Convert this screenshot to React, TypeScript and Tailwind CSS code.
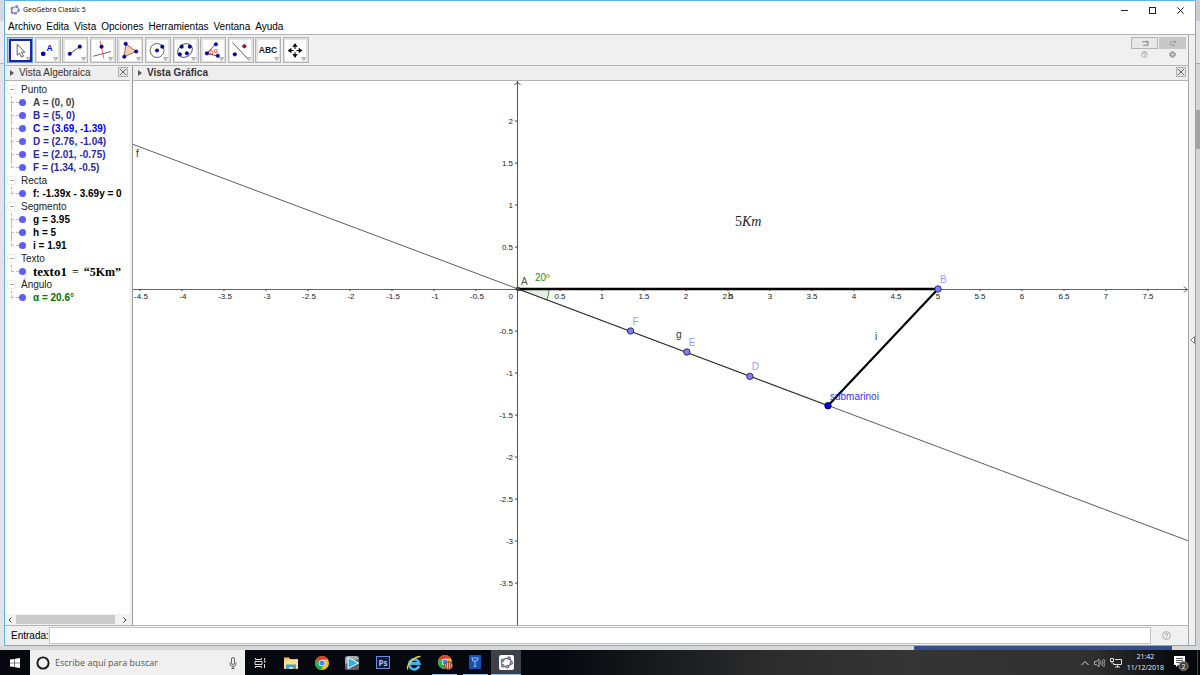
import type { ReactNode } from "react";
import clsx from "clsx";

type Item = { label: ReactNode; color: string };
type Group = { name: string; items: Item[] };

const MENU = ["Archivo", "Edita", "Vista", "Opciones", "Herramientas", "Ventana", "Ayuda"];

const GROUPS: Group[] = [
  {
    name: "Punto",
    items: [
      { label: "A = (0, 0)", color: "text-[#444444]" },
      { label: "B = (5, 0)", color: "text-[#2a2aa8]" },
      { label: "C = (3.69, -1.39)", color: "text-[#0000ff]" },
      { label: "D = (2.76, -1.04)", color: "text-[#2a2aa8]" },
      { label: "E = (2.01, -0.75)", color: "text-[#2a2aa8]" },
      { label: "F = (1.34, -0.5)", color: "text-[#2a2aa8]" },
    ],
  },
  { name: "Recta", items: [{ label: "f: -1.39x - 3.69y = 0", color: "text-black" }] },
  {
    name: "Segmento",
    items: [
      { label: "g = 3.95", color: "text-black" },
      { label: "h = 5", color: "text-black" },
      { label: "i = 1.91", color: "text-black" },
    ],
  },
  {
    name: "Texto",
    items: [
      {
        label: (
          <span className="flex items-baseline gap-[5px] font-['Liberation_Serif',serif] text-[12px]">
            <span className="text-[13px]">texto1</span>
            <span className="font-normal">=</span>
            <span>“5Km”</span>
          </span>
        ),
        color: "text-black",
      },
    ],
  },
  { name: "Ángulo", items: [{ label: "α = 20.6°", color: "text-[#007400]" }] },
];

const dot = (cx: number, cy: number, fill = "#0000b4") => (
  <circle cx={cx} cy={cy} r="1.9" fill={fill} stroke="#000050" strokeWidth="0.4" />
);

const TOOLS: { name: string; icon: ReactNode }[] = [
  {
    name: "Elige y mueve",
    icon: <path d="M7.500 4.500V16l2.600-2.200 2 4.200 2-1-2-4.200h3.400z" fill="#fff" stroke="#444" strokeWidth="0.9" />,
  },
  {
    name: "Punto",
    icon: (
      <>
        <circle cx="6.5" cy="14.5" r="2.5" fill="#0000b4" />
        <text x="10" y="11" fontSize="9" fontWeight="bold" fill="#0000ee">A</text>
      </>
    ),
  },
  {
    name: "Segmento",
    icon: (
      <>
        <path d="M5 14.5 15.5 7" stroke="#222" strokeWidth="0.8" />
        {dot(5, 14.5)}
        {dot(15.5, 7)}
      </>
    ),
  },
  {
    name: "Perpendicular",
    icon: (
      <>
        <path d="M1.5 17 20 12" stroke="#333" strokeWidth="0.8" />
        <path d="M8.5 1 12.5 19.5" stroke="#ff3030" strokeWidth="0.8" />
        {dot(10, 7)}
      </>
    ),
  },
  {
    name: "Polígono",
    icon: (
      <>
        <path d="M6 4 17 12 4.500 17.500z" fill="#f0cdbb" stroke="#a0522d" strokeWidth="0.9" />
        {dot(6, 4)}
        {dot(17, 12)}
        {dot(4.5, 17.5)}
      </>
    ),
  },
  {
    name: "Circunferencia",
    icon: (
      <>
        <circle cx="10.500" cy="11" r="7.3" fill="none" stroke="#333" strokeWidth="0.8" />
        {dot(10.5, 11)}
        {dot(16, 7)}
      </>
    ),
  },
  {
    name: "Elipse",
    icon: (
      <>
        <ellipse cx="10.500" cy="11" rx="8.2" ry="6.600" transform="rotate(-35 10.5 11)" fill="none" stroke="#333" strokeWidth="0.8" />
        {dot(7, 7)}
        {dot(15.5, 7)}
        {dot(5, 15)}
        {dot(12.5, 14)}
      </>
    ),
  },
  {
    name: "Ángulo",
    icon: (
      <>
        <path d="M4 14 9 10a6 6 0 0 1 1 5.500z" fill="#ffc8c8" stroke="#ff4040" strokeWidth="0.7" />
        <path d="M13.500 4 4 14 16 17" fill="none" stroke="#333" strokeWidth="0.8" />
        <text x="11.500" y="13.500" fontSize="7" fill="#ee2020">α</text>
        {dot(13.5, 4.5)}
        {dot(4, 14)}
        {dot(15.5, 16.5)}
      </>
    ),
  },
  {
    name: "Simetría",
    icon: (
      <>
        <path d="M2.500 2.500 18 19" stroke="#333" strokeWidth="0.8" />
        {dot(15, 6.5, "#c01010")}
        {dot(5, 15)}
      </>
    ),
  },
  {
    name: "Texto",
    icon: (
      <text x="10.500" y="14" textAnchor="middle" fontSize="9" fontWeight="bold" fill="#222">ABC</text>
    ),
  },
  {
    name: "Desplaza vista",
    icon: (
      <g fill="#000" stroke="#000">
        <path d="M10.500 5v12M4.500 11h12" strokeWidth="1" strokeDasharray="4.500 3" />
        <path d="M10.500 3.500 8 7h5zM10.500 18.500 8 15h5zM3 11l3.500-2.500v5zM18 11l-3.500-2.500v5z" strokeWidth="0.3" />
      </g>
    ),
  },
];

function GeoLogo({ className, color = "#55558c" }: { className?: string; color?: string }) {
  return (
    <svg viewBox="0 0 16 16" className={className} aria-hidden="true">
      <ellipse cx="8" cy="8" rx="6" ry="5" transform="rotate(-30 8 8)" fill="none" stroke={color} strokeWidth="1.2" />
      {[[11, 2.7], [14, 8.500], [9, 13.3], [3.3, 12], [3, 5.500]].map(([x, y]) => (
        <circle key={x} cx={x} cy={y} r="1.8" fill="#9999ff" stroke={color} strokeWidth="0.8" />
      ))}
    </svg>
  );
}

function CloseBox() {
  return (
    <button aria-label="Cerrar" className="size-[10px] border border-[#b0b0b0] bg-[#e4e4e4]">
      <svg viewBox="0 0 8 8" className="size-2">
        <path d="M1 1l6 6M7 1 1 7" stroke="#555" strokeWidth="0.9" />
      </svg>
    </button>
  );
}

function HelpIcon() {
  return (
    <svg viewBox="0 0 10 10" className="size-[9px]">
      <circle cx="5" cy="5" r="4.3" fill="none" stroke="#999" strokeWidth="0.9" />
      <path d="M3.700 4a1.300 1.300 0 1 1 1.800 1.200L5 6M5 7v1" fill="none" stroke="#888" strokeWidth="0.9" />
    </svg>
  );
}

function PanelHeader({ title, bold }: { title: string; bold?: boolean }) {
  return (
    <div className="flex h-[15px] shrink-0 items-center border-b border-[#b4b4b4] bg-[#eeeeee] pr-[2px] pl-[5px]">
      <svg viewBox="0 0 4 6" className="mr-1 h-[6px] w-1">
        <path d="M0 0l4 3-4 3z" fill="#555" />
      </svg>
      <h2 className={clsx("flex-1 pl-px leading-[14px] text-[#333]", bold && "font-bold")}>{title}</h2>
      <div className="flex self-start pt-px">
        <CloseBox />
      </div>
    </div>
  );
}

function Algebra() {
  return (
    <aside className="flex w-[125px] shrink-0 flex-col">
      <PanelHeader title="Vista Algebraica" />
      <div className="flex-1 overflow-hidden bg-white pt-[2px] pl-[2px]">
        {GROUPS.map((g) => (
          <section key={g.name}>
            <h3 className="flex h-[13px] items-center gap-[5px] leading-[13px] text-[#222]">
              <span className="flex size-[9px] items-center justify-center rounded-xs border border-[#ececec]">
                <span className="h-px w-1 bg-[#aaa]" />
              </span>
              {g.name}
            </h3>
            <ul>
              {g.items.map((it, i) => (
                <li key={i} className="flex h-[13px] items-center whitespace-nowrap">
                  <span className="ml-1 flex h-full w-2 flex-col">
                    <span className="h-[7px] w-full border-b border-l border-dashed border-[#bbb]" />
                    <span
                      className={clsx("flex-1 border-dashed border-[#bbb]", i < g.items.length - 1 && "border-l")}
                    />
                  </span>
                  <span className="size-[7px] rounded-full bg-[#5c5cff]" />
                  <span className={clsx("pl-[7px] font-bold leading-[13px]", it.color)}>{it.label}</span>
                </li>
              ))}
            </ul>
          </section>
        ))}
      </div>
      <div className="flex h-[11px] shrink-0 items-center justify-between bg-[#f1f1f1] px-[3px]">
        <svg viewBox="0 0 4 6" className="h-[6px] w-1">
          <path d="M3.500.5 1 3l2.500 2.500" fill="none" stroke="#444" />
        </svg>
        <div className="ml-1 mr-2 h-[9px] flex-1 bg-[#cbcbcb]" />
        <svg viewBox="0 0 4 6" className="h-[6px] w-1">
          <path d="M.5.5 3 3 .5 5.500" fill="none" stroke="#444" />
        </svg>
      </div>
    </aside>
  );
}

// Graph coordinates: origin in pixels and pixels per unit
const OX = 385;
const OY = 208;
const UNIT = 84;
const px = (x: number) => OX + x * UNIT;
const py = (y: number) => OY - y * UNIT;
const SLOPE = 1.39 / 3.7;

const X_TICKS = Array.from({ length: 25 }, (_, i) => (i - 9) / 2).filter((t) => t !== 0);
const Y_TICKS = Array.from({ length: 12 }, (_, i) => (i - 7) / 2).filter((t) => t !== 0);

const POINTS = [
  { name: "F", x: 1.34, y: -0.5 },
  { name: "E", x: 2.01, y: -0.75 },
  { name: "D", x: 2.76, y: -1.04 },
  { name: "B", x: 5, y: 0 },
];

function Graph() {
  return (
    <svg className="block min-h-0 w-full flex-1 bg-white" fontSize="10" role="img" aria-label="Vista Gráfica">
      <path d={`M${OX} ${OY}h31a31 31 0 0 1-2 11z`} fill="#e3efe3" />
      <path d={`M${OX + 31} ${OY}a31 31 0 0 1-2 11`} fill="none" stroke="#3c963c" />

      <g shapeRendering="crispEdges">
        <line x1="0" x2="100%" y1={OY} y2={OY} stroke="#666" />
        <line x1={OX - 1} x2={OX - 1} y1="0" y2="100%" stroke="#555" />
      </g>
      <path d={`M${OX - 3.5} 4l3-3 3 3`} fill="none" stroke="#444" />
      <svg x="100%" y={OY - 3} overflow="visible">
        <path d="M-4 .5-1 3.500l-3 3" fill="none" stroke="#444" />
      </svg>

      <g fontSize="8" fill="#222">
        {X_TICKS.map((t) => (
          <g key={t}>
            <line x1={px(t)} x2={px(t)} y1={OY} y2={OY + 2} stroke="#444" />
            <text x={t < 0 ? px(t) + 1 : px(t)} y={OY + 10} textAnchor="middle">{t}</text>
          </g>
        ))}
        {Y_TICKS.map((t) => (
          <g key={t}>
            <line x1={OX - 3} x2={OX - 1} y1={py(t)} y2={py(t)} stroke="#444" />
            <text x={OX - 5} y={py(t) + 3} textAnchor="end">{t}</text>
          </g>
        ))}
        <text x={OX - 5} y={OY + 10} textAnchor="end">0</text>
      </g>

      <line x1={px(-10)} y1={OY - 10 * UNIT * SLOPE} x2={px(20)} y2={OY + 20 * UNIT * SLOPE} stroke="#333" strokeWidth="0.8" />
      <line x1={OX} y1={OY} x2={px(3.69)} y2={py(-1.39)} stroke="#222" strokeWidth="0.8" />
      <line x1={OX} y1={OY} x2={px(5)} y2={OY} stroke="#000" strokeWidth="2.300" />
      <line x1={px(5)} y1={OY} x2={px(3.69)} y2={py(-1.39)} stroke="#000" strokeWidth="2.200" />

      <circle cx={OX} cy={OY} r="1.800" fill="#555" stroke="#222" strokeWidth="0.8" />
      {POINTS.map((p) => (
        <g key={p.name}>
          <circle cx={px(p.x)} cy={py(p.y)} r="3.200" fill="#7d7dff" stroke="#222244" strokeWidth="0.9" />
          <text x={px(p.x) + 2} y={py(p.y) - 6} fill="#9c9cff">{p.name}</text>
        </g>
      ))}
      <circle cx={px(3.69)} cy={py(-1.39)} r="3.200" fill="#0000ff" stroke="#000040" strokeWidth="0.9" />
      <text x={px(3.69) + 2} y={py(-1.39) - 6} fill="#3333ff">submarinoi</text>

      <g fill="#333">
        <text x="3" y="76">f</text>
        <text x={OX + 3} y={OY - 4} fill="#555">A</text>
        <text x={OX + 17} y={OY - 8} fill="#2a862a">20º</text>
        <text x="543" y="257">g</text>
        <text x="742" y="259">i</text>
        <text x="595" y="218" fontSize="9">h</text>
      </g>
      <text x="602" y="145" fontSize="14" fill="#222" className="font-['Liberation_Serif',serif]">
        5<tspan fontStyle="italic">Km</tspan>
      </text>
    </svg>
  );
}

const ChromeIcon = () => (
  <>
    <circle cx="8" cy="8" r="7" fill="#fbc116" />
    <path d="M8 8 1.900 4.500A7 7 0 0 1 14.100 4.500H8z" fill="#e33b2e" />
    <path d="M8 8 1.900 4.500A7 7 0 0 0 7 15l3.500-5.500z" fill="#2da94f" />
    <circle cx="8" cy="8" r="3.300" fill="#fff" />
    <circle cx="8" cy="8" r="2.600" fill="#4285f4" />
  </>
);

const TASKS: { name: string; icon: ReactNode; open?: boolean; active?: boolean }[] = [
  {
    name: "Vista de tareas",
    icon: (
      <g fill="none" stroke="#ddd" strokeWidth="1">
        <path d="M3.500 3v1.500h6V3M3.500 13v-1.500h6V13M3 6.500h7v3H3zM12.500 3v2M12.500 9v4" />
        <path d="M12 6.500h1.500" strokeWidth="2" />
      </g>
    ),
  },
  {
    name: "Explorador",
    icon: (
      <>
        <path d="M1 2.500h5l1 1.500h8v10H1z" fill="#f5c84c" />
        <path d="M1 5h14v8H1z" fill="#fde08a" />
        <path d="M3 14V9.500h10V14h-3v-2H6v2z" fill="#3e9ce0" />
      </>
    ),
  },
  { name: "Chrome", icon: <ChromeIcon /> },
  {
    name: "Reproductor",
    icon: (
      <>
        <rect x="1" y="1" width="14" height="14" rx="3" fill="#a3abac" />
        <path d="M1 9 15 4v8a3 3 0 0 1-3 3H4a3 3 0 0 1-3-3z" fill="#5c6668" />
        <path d="M4 2.500 14.500 8 4 13.500z" fill="#32aee8" stroke="#fff" />
      </>
    ),
  },
  {
    name: "Photoshop",
    icon: (
      <>
        <rect x="1.500" y="1.500" width="13" height="12" fill="#101c48" stroke="#6f8cd0" />
        <text x="8" y="10.500" fontSize="8" fontWeight="bold" textAnchor="middle" fill="#a9c4ff">Ps</text>
      </>
    ),
  },
  {
    name: "Internet Explorer",
    icon: (
      <>
        <path d="M13 11A5 5 0 1 1 13.200 8.500H4" fill="none" stroke="#41b6ee" strokeWidth="2.800" />
        <path d="M2 14.500C-.5 11 8 1.500 14.500 1.500" fill="none" stroke="#f7c83b" strokeWidth="1.300" />
      </>
    ),
  },
  {
    name: "Chrome perfil",
    open: true,
    icon: (
      <>
        <ChromeIcon />
        <circle cx="11.500" cy="11.500" r="4" fill="#e9c82a" stroke="#7a2060" />
        <path d="M11.500 7.500v8M9.500 9v5M13.500 9v5" stroke="#8a1c50" strokeWidth="0.7" />
      </>
    ),
  },
  {
    name: "Tareas",
    open: true,
    icon: (
      <>
        <rect x="2" y="1" width="12" height="14" fill="#1450b4" />
        <path d="M5 4h6l-1 3H6zM8 7v6M6.500 12.500h3" fill="none" stroke="#8ab8f4" strokeWidth="1.200" />
      </>
    ),
  },
  { name: "GeoGebra", open: true, active: true, icon: null },
];

function Taskbar() {
  return (
    <footer className="flex h-[25px] shrink-0 bg-[linear-gradient(90deg,#05080e_46%,#2c2c2c_64%,#353535_76%,#303030_91%,#08090d_98%)] font-['Open_Sans',sans-serif] text-[#eee]">
      <button aria-label="Inicio" className="flex w-[30px] items-center justify-center">
        <svg viewBox="0 0 10 10" className="size-[10px]">
          <path d="M0 1.500 4.500.9v3.800H0zM5 .8 10 0v4.700H5zM0 5.200h4.500v3.900L0 8.500zM5 5.200h5V10l-5-.7z" fill="#fff" />
        </svg>
      </button>
      <label className="flex w-[215px] items-center gap-[5px] bg-[#f0f0f0] pr-2 pl-[6px]">
        <svg viewBox="0 0 14 14" className="size-[14px]">
          <circle cx="7" cy="7" r="5.600" fill="none" stroke="#1a1a1a" strokeWidth="1.900" />
        </svg>
        <input
          aria-label="Buscar"
          placeholder="Escribe aquí para buscar"
          className="min-w-0 flex-1 font-['Open_Sans',sans-serif] text-[9px] placeholder:text-[#555]"
        />
        <svg viewBox="0 0 8 12" className="h-3 w-2" fill="none" stroke="#555" strokeWidth="0.9">
          <rect x="2.500" y=".5" width="3" height="7" rx="1.500" />
          <path d="M1 5.500v1a3 3 0 0 0 6 0v-1M4 9.500v2M2.500 11.500h3" />
        </svg>
      </label>
      <nav className="flex w-[276px] justify-between">
        {TASKS.map((t) => (
          <button
            key={t.name}
            aria-label={t.name}
            className={clsx("flex w-[30px] flex-col items-center", t.active && "bg-[#3c4248]")}>
            <span className="flex flex-1 items-center">
              {t.icon ? (
                <svg viewBox="0 0 16 16" className="size-4">{t.icon}</svg>
              ) : (
                <span className="flex size-[15px] items-center justify-center rounded-xs bg-white">
                  <GeoLogo className="size-[13px]" color="#444" />
                </span>
              )}
            </span>
            {t.open && <span className={clsx("h-px bg-[#8fc4f0]", t.active ? "w-full" : "w-[25px]")} />}
          </button>
        ))}
      </nav>
      <div className="ml-auto flex items-center gap-[5px] pr-[2px]">
        <svg viewBox="0 0 8 6" className="h-[6px] w-2">
          <path d="M.5 5 4 1.500 7.500 5" fill="none" stroke="#ddd" />
        </svg>
        <svg viewBox="0 0 11 10" className="h-[10px] w-[11px]" fill="none" stroke="#ccc" strokeWidth="0.8">
          <path d="M.5 3.500h2L5 1v8L2.500 6.500h-2z" />
          <path d="M6.500 3.500a3 3 0 0 1 0 3M8 2a5 5 0 0 1 0 6M9.500 1a6 6 0 0 1 0 8" />
        </svg>
        <svg viewBox="0 0 12 10" className="h-[10px] w-3" fill="none" stroke="#ddd">
          <path d="M5 1.500h6.500v5h-8V5M7.500 6.500v2.500M5 9h5M.5.5h3v3h-3zM2 3.500v2" />
        </svg>
        <time className="pb-px text-center text-[7px] leading-[11px]">
          21:42
          <br />
          11/12/2018
        </time>
        <svg viewBox="0 0 17 16" className="mx-[3px] h-4 w-[17px]">
          <path d="M2 1h11v9H6l-2 2v-2H2z" fill="#fff" />
          <path d="M4 3.500h7M4 5.500h7M4 7.500h5" stroke="#333" strokeWidth="0.8" />
          <circle cx="11.500" cy="11" r="4.600" fill="#444" stroke="#999" strokeWidth="0.8" />
          <text x="11.500" y="13.700" fontSize="7" textAnchor="middle" fill="#fff">2</text>
        </svg>
        <span className="h-[25px] w-px bg-[#444]" />
      </div>
    </footer>
  );
}

export default function App() {
  return (
    <div className="flex h-screen flex-col overflow-hidden bg-[#e4e4e6] font-['Liberation_Sans',sans-serif] text-[10px] text-black">
      <div className="flex min-h-0 flex-1">
        <div className="w-1 shrink-0">
          <div className="h-[21px] bg-[#d3d9df]" />
          <div className="h-[43px] border-b border-[#b8b8b8] bg-[#ececec]" />
        </div>

        <main className="flex min-w-0 flex-1 flex-col border border-[#5fb4e6] bg-[#f0f0f0]">
          <header className="bg-white">
            <div className="flex h-[18px] items-center gap-[3px] pr-[11px] pl-[5px]">
              <GeoLogo className="size-[10px]" />
              <h1 className="flex-1 font-['Open_Sans',sans-serif] text-[7px]">GeoGebra Classic 5</h1>
              <div className="flex items-center gap-[21px] text-[#222]">
                <button aria-label="Minimizar" className="flex size-[7px] items-center">
                  <span className="h-px w-full bg-current" />
                </button>
                <button aria-label="Maximizar" className="size-[7px] border border-current" />
                <button aria-label="Cerrar ventana" className="flex size-[7px]">
                  <svg viewBox="0 0 7 7" className="size-[7px]">
                    <path d="M.3.300l6.400 6.400M6.700.3.300 6.700" stroke="currentColor" />
                  </svg>
                </button>
              </div>
            </div>
            <nav className="flex h-[15px] items-center gap-[5px] pt-px pl-[3px]">
              {MENU.map((m) => (
                <button key={m} className="leading-[14px]">
                  {m}
                </button>
              ))}
            </nav>
          </header>

          <div className="flex min-h-0 flex-1 border-t border-[#b4b4b4]">
            <div className="flex min-w-0 flex-1 flex-col border-r border-[#a8a8a8]">
              <div className="flex h-[31px] shrink-0 items-center justify-between border-b border-[#b4b4b4] px-[2px]">
                <div className="flex w-[302px] justify-between" role="toolbar">
                  {TOOLS.map((t, i) => (
                    <button
                      key={t.name}
                      aria-label={t.name}
                      className={clsx(
                        "flex size-[26px] items-center justify-center border",
                        i === 0 ? "border-[#6a9cc8] bg-[#a8cdea]" : "border-[#b4b4b4] bg-[#e2e2e2]"
                      )}>
                      <span
                        className={clsx("flex bg-white", i === 0 && "outline-2 -outline-offset-1 outline-[#2222a8]")}>
                        <svg viewBox="0 0 22 22" className="size-[21px]">
                          {t.icon}
                          <path d="M17.500 18.500h4l-2 3z" fill="#eee" stroke="#777" strokeWidth="0.7" />
                        </svg>
                      </span>
                    </button>
                  ))}
                </div>
                <div className="grid grid-cols-2 justify-items-center gap-x-px gap-y-px pb-1">
                  <button aria-label="Deshacer" className="flex h-3 w-[27px] items-center justify-center border border-[#b4b4b4] bg-[#e8e8e8]">
                    <svg viewBox="0 0 8 6" className="h-[6px] w-2" fill="none" stroke="#888">
                      <path d="M5.500.3 7 1.800 5.500 3.300M7 1.800H1M7 1.800v3.500H2" />
                    </svg>
                  </button>
                  <button aria-label="Rehacer" className="flex h-3 w-[27px] items-center justify-center bg-[#c8c8c8]">
                    <svg viewBox="0 0 8 6" className="h-[6px] w-2" fill="none" stroke="#999">
                      <path d="M5.500.3 7 1.800 5.500 3.300M7 1.800H2.500a1.700 1.700 0 0 0 0 3.500H6" />
                    </svg>
                  </button>
                  <button aria-label="Ayuda" className="flex h-[9px] items-center">
                    <svg viewBox="0 0 10 10" className="size-[7px]">
                      <circle cx="5" cy="5" r="4.200" fill="none" stroke="#999" />
                      <path d="M3.500 4a1.500 1.500 0 1 1 2 1.300L5 6.500v1.500" fill="none" stroke="#888" />
                    </svg>
                  </button>
                  <button aria-label="Preferencias" className="flex h-[9px] items-center">
                    <svg viewBox="0 0 10 10" className="size-[7px]">
                      <circle cx="5" cy="5" r="2.600" fill="none" stroke="#777" strokeWidth="1.500" />
                      <circle cx="5" cy="5" r="4.200" fill="none" stroke="#777" strokeWidth="1.400" strokeDasharray="1.650 1.650" />
                    </svg>
                  </button>
                </div>
              </div>

              <div className="flex min-h-0 flex-1">
                <Algebra />
                <div className="ml-[2px] w-px bg-[#9a9a9a]" />
                <section className="flex min-w-0 flex-1 flex-col">
                  <PanelHeader title="Vista Gráfica" bold />
                  <Graph />
                </section>
              </div>

              <div className="flex h-[20px] shrink-0 items-center border-t border-[#b4b4b4] pr-[17px] pl-[6px]">
                <label htmlFor="entrada">Entrada:</label>
                <input id="entrada" className="h-[17px] min-w-0 flex-1 border border-[#c4c4c4] bg-white px-1" />
                <button aria-label="Ayuda de entrada" className="ml-[11px] flex">
                  <HelpIcon />
                </button>
              </div>
            </div>
            <div className="flex w-[6px] shrink-0 items-center justify-center">
              <svg viewBox="0 0 5 8" className="h-2 w-[5px]">
                <path d="M4.500.7v6.600L.7 4z" fill="#fff" stroke="#666" strokeWidth="0.8" />
              </svg>
            </div>
          </div>
        </main>

        <div className="w-1 shrink-0 bg-[#d4d4d8]">
          <div className="h-[21px] bg-[#c8ced4]" />
          <div className="h-[43px] border-b border-[#a8a8a8] bg-[#e4e4e4]" />
          <div className="mt-[46px] h-[39px] bg-[#a4a4a8]" />
        </div>
      </div>
      <div className="flex h-1 shrink-0 justify-end bg-[#d8d8da] pr-7">
        <div className="w-[258px] bg-[#34508c]" />
      </div>
      <Taskbar />
    </div>
  );
}
